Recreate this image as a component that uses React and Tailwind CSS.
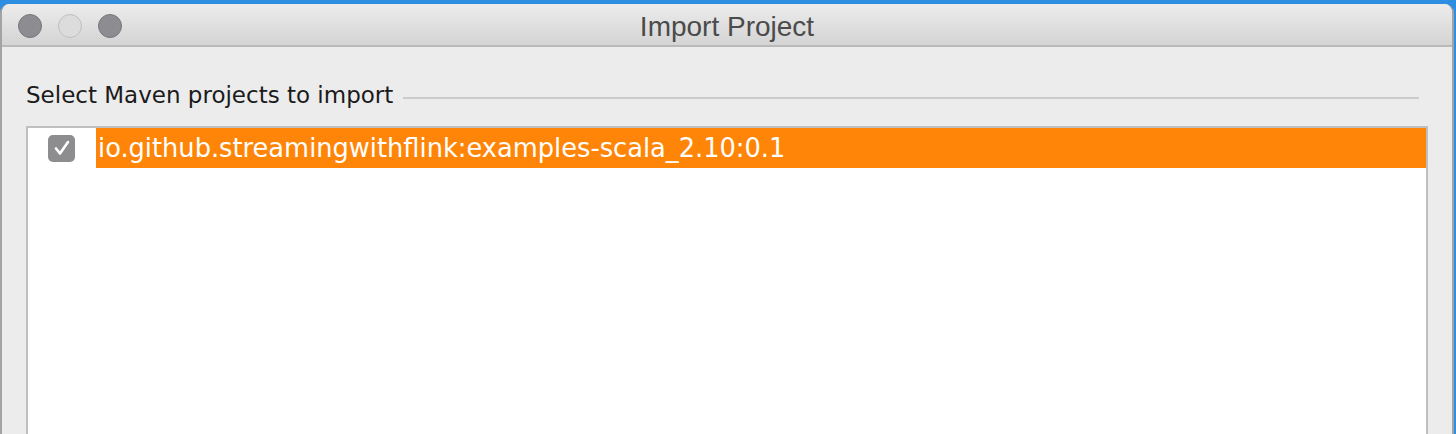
export default function App() {
  return (
    <div className="h-[434px] w-[1456px] overflow-hidden bg-[#2e8fe2] pt-[4px] font-['Liberation_Sans',sans-serif]">
      <div className="flex h-[430px] w-[1454px] flex-col overflow-hidden rounded-t-[9px] border-x-2 border-[#a3a3a3] bg-[#ececec]">
        <div className="relative flex h-[43px] shrink-0 items-center border-b-2 border-[#b9b9b9] bg-gradient-to-b from-[#ececec] to-[#d4d4d4]">
          <div className="flex gap-[16px] pl-[16px] pt-[2px]">
            <span className="h-[24px] w-[24px] rounded-full border border-[#77767a] bg-[#8d8c90]" />
            <span className="h-[24px] w-[24px] rounded-full border border-[#bfbfbf] bg-[#dcdcdc]" />
            <span className="h-[24px] w-[24px] rounded-full border border-[#77767a] bg-[#8d8c90]" />
          </div>
          <div className="absolute inset-0 flex items-center justify-center pt-[4px] text-[28px] text-[#4b4b4b]">
            Import Project
          </div>
        </div>
        <div className="flex flex-1 flex-col pl-[24px] pr-[24px] pt-[33px] font-['DejaVu_Sans',sans-serif]">
          <div className="flex items-center gap-[10px]">
            <span className="text-[23px] leading-[30px] text-[#1b1b1b]">Select Maven projects to import</span>
            <span className="mt-[6px] mr-[9px] h-[2px] flex-1 bg-[#cbcbcb]" />
          </div>
          <div className="mt-[16px] flex-1 border-2 border-b-0 border-[#bfbfbf] bg-white">
            <div className="flex h-[40px] items-center">
              <div className="flex w-[68px] items-center pl-[20px]">
                <span className="flex h-[27px] w-[27px] items-center justify-center rounded-[5px] bg-[#8d8d8f]">
                  <svg width="20" height="20" viewBox="0 0 20 20" fill="none">
                    <path d="M4 10.5 L8 15.5 L16 4" stroke="white" strokeWidth="2.6" strokeLinecap="round" strokeLinejoin="round" />
                  </svg>
                </span>
              </div>
              <div className="flex h-full flex-1 items-center bg-[#ff8508] pl-[2px] text-[25.7px] text-white">
                io.github.streamingwithflink:examples-scala_2.10:0.1
              </div>
            </div>
          </div>
        </div>
      </div>
    </div>
  );
}
